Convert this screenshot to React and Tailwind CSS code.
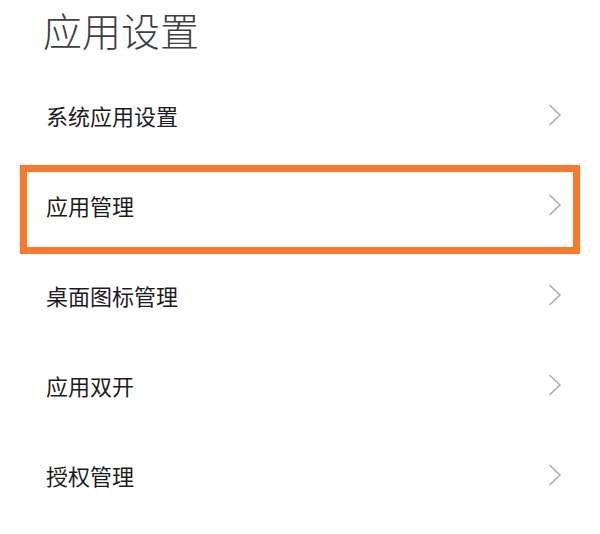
const items = ['系统应用设置', '应用管理', '桌面图标管理', '应用双开', '授权管理'];

// 右侧细箭头
const Chevron = () => (
  <svg width="14" height="22" viewBox="0 0 14 22" fill="none" className="text-[#ababab]">
    <polyline points="2,1.5 12,11 2,20.5" stroke="currentColor" strokeWidth="1.6" strokeLinecap="round" strokeLinejoin="round" />
  </svg>
);

const Row = ({ label }) => (
  <div className="h-[90px] flex items-center justify-between pl-[46px] pr-[38px] pb-[6px]">
    <span className="text-[22px] leading-none text-[#1c1c1c]">{label}</span>
    <Chevron />
  </div>
);

export default function App() {
  return (
    <div
      className="relative w-[600px] h-[534px] bg-white overflow-hidden"
      style={{ fontFamily: '"Noto Sans CJK SC", "Noto Sans", sans-serif' }}
    >
      {/* 标题 */}
      <div className="h-[73px] pl-[43px] pt-[1px]">
        <h1 className="text-[39px] leading-[56px] font-extralight text-[#404040]">应用设置</h1>
      </div>

      {/* 列表 */}
      <div>
        {items.map((label) => (
          <Row key={label} label={label} />
        ))}
      </div>

      {/* 高亮标注框 */}
      <div className="absolute left-[20px] top-[165px] w-[560px] h-[89px] border-[7px] border-[#fa7a2c] pointer-events-none" />
    </div>
  );
}
